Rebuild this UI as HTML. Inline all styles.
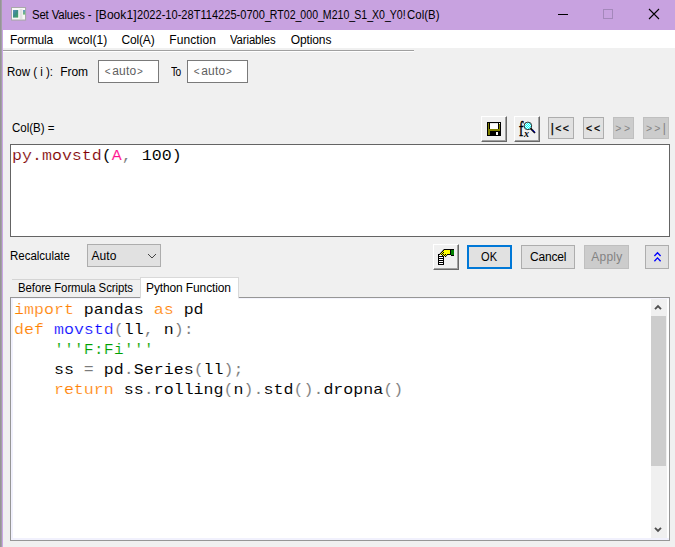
<!DOCTYPE html>
<html>
<head>
<meta charset="utf-8">
<title>Set Values</title>
<style>
html,body{margin:0;padding:0;}
body{width:675px;height:547px;overflow:hidden;background:#f0f0f0;position:relative;
  font-family:"Liberation Sans",sans-serif;font-size:12px;color:#000;}
.abs{position:absolute;}
.u{letter-spacing:-1.2px;}
.lt{font-size:10px;}
.l2{font-size:10.5px;}
.t{position:absolute;white-space:nowrap;line-height:16px;height:16px;transform-origin:0 50%;}
#titlebar{left:0;top:0;width:675px;height:30px;background:#c8a2e0;}
#menubar{left:3px;top:30px;width:672px;height:18px;background:#fff;}
#edgeL{left:0;top:0;width:2px;height:547px;background:linear-gradient(90deg,#959595 0,#959595 1px,#a3a0a6 1px);}
#edgeL2{left:2px;top:30px;width:1px;height:517px;background:#c9a6e4;}
.sep{left:3px;top:50px;width:411px;height:1px;background:#a0a0a0;}
.sep2{left:3px;top:51px;width:411px;height:1px;background:#fff;}
.inp{position:absolute;background:#fff;border:1px solid #7a7a7a;box-sizing:border-box;}
.btn{position:absolute;box-sizing:border-box;background:#e1e1e1;border:1px solid #adadad;}
.btn.dis{background:#cccccc;border-color:#bfbfbf;}
.btn3d{position:absolute;box-sizing:border-box;background:#f0f0f0;
  border-top:1px solid #fff;border-left:1px solid #fff;border-right:1px solid #696969;border-bottom:1px solid #696969;}
.btn3d:before{content:"";position:absolute;left:0;top:0;right:0;bottom:0;border-right:1px solid #a0a0a0;border-bottom:1px solid #a0a0a0;}
.mono{font-family:"Liberation Mono",monospace;font-size:14px;line-height:20px;white-space:pre;position:absolute;transform:scaleX(1.1875);transform-origin:0 0;-webkit-text-stroke:0.05px #fff;}
.o{color:#ff8000;-webkit-text-stroke:0.2px #fff}.b{color:#0000ff;-webkit-text-stroke:0.2px #fff}.g{color:#7a7a7a;-webkit-text-stroke:0.1px #fff}.gr{color:#00a000;-webkit-text-stroke:0.2px #fff}.k{color:#000}.r{color:#800000;-webkit-text-stroke:0.15px #fff}.m{color:#ff1090;-webkit-text-stroke:0.1px #fff}
</style>
</head>
<body>
<div class="abs" id="titlebar"></div>
<div class="abs" id="menubar"></div>
<div class="abs" id="edgeL"></div>
<div class="abs" id="edgeL2"></div>
<div class="abs sep"></div><div class="abs sep2"></div>

<!-- title icon -->
<svg class="abs" style="left:10px;top:6px" width="18" height="16" viewBox="0 0 18 16">
  <defs>
    <linearGradient id="gA" x1="0" y1="0" x2="1" y2="1"><stop offset="0" stop-color="#5b8fc0"/><stop offset="0.5" stop-color="#3c8d86"/><stop offset="1" stop-color="#43a85a"/></linearGradient>
    <linearGradient id="gB" x1="0" y1="0" x2="0" y2="1"><stop offset="0" stop-color="#6a98c8"/><stop offset="1" stop-color="#6cc070"/></linearGradient>
  </defs>
  <rect x="1" y="1" width="15.5" height="14" rx="1" fill="#b9a0cc" opacity="0.55"/>
  <rect x="1.5" y="1.5" width="14" height="12.5" fill="#f7f7f7" stroke="#a9a9a9" stroke-width="1"/>
  <rect x="3" y="4" width="5.2" height="7.6" fill="url(#gA)"/>
  <rect x="9.6" y="3" width="2.8" height="10" fill="#e2e2e2"/>
  <rect x="13" y="4" width="2.2" height="4.6" fill="url(#gB)"/>
</svg>
<div id="title" class="abs" style="left:0;top:0;width:0;height:0;"><span class="t" id="t1" style="left:31.73px;top:7px;transform:scaleX(0.95);letter-spacing:-0.171px;">Set Values - </span><span class="t" id="t2" style="left:95.44px;top:7px;letter-spacing:0.058px;">[Book1]</span><span class="t" id="t3" style="left:137.0px;top:7px;transform:scaleX(0.92);letter-spacing:0.023px;">2022-10-28T114225-0700</span><span class="t" id="t4" style="left:265.15px;top:7px;transform:scaleX(0.88);letter-spacing:0.02px;"><span class="u">_</span>RT02<span class="u">_</span>000<span class="u">_</span>M210<span class="u">_</span>S1<span class="u">_</span>X0<span class="u">_</span>Y0!</span><span class="t" id="t5" style="left:407.31px;top:7px;transform:scaleX(0.95);letter-spacing:0.028px;">Col(B)</span></div>

<!-- window buttons -->
<svg class="abs" style="left:550px;top:0" width="125" height="30" viewBox="0 0 125 30">
  <path d="M8 14.5H18" stroke="#000" stroke-width="1" fill="none"/>
  <rect x="53.5" y="9.5" width="9" height="9" fill="none" stroke="#a488bb" stroke-width="1"/>
  <path d="M99 9L109 19M109 9L99 19" stroke="#000" stroke-width="1.1" fill="none"/>
</svg>

<!-- menu -->
<div class="t" id="m1" style="left:10.05px;top:32px;letter-spacing:-0.135px;">Formula</div>
<div class="t" id="m2" style="left:68.38px;top:32px;letter-spacing:0.029px;">wcol(1)</div>
<div class="t" id="m3" style="left:121.38px;top:32px;letter-spacing:-0.144px;">Col(A)</div>
<div class="t" id="m4" style="left:169.37px;top:32px;letter-spacing:0.065px;">Function</div>
<div class="t" id="m5" style="left:230.16px;top:32px;transform:scaleX(0.94);letter-spacing:-0.089px;">Variables</div>
<div class="t" id="m6" style="left:290.81px;top:32px;letter-spacing:-0.123px;">Options</div>

<!-- row -->
<div class="t" id="r1" style="left:7.31px;top:64px;transform:scaleX(0.96);letter-spacing:-0.014px;">Row ( i ):</div>
<div class="t" id="r2" style="left:60.37px;top:64px;letter-spacing:-0.083px;">From</div>
<div class="inp" style="left:98px;top:60px;width:61px;height:23px;"></div>
<div class="t" id="a1" style="left:104.7px;top:63px;color:#5f5f5f;letter-spacing:0.181px;"><span class="lt" style="margin-right:1.5px">&lt;</span>auto<span class="lt" style="margin-left:0.7px">&gt;</span></div>
<div class="t" id="r3" style="left:170.82px;top:64px;transform:scaleX(0.85);letter-spacing:-0.595px;">To</div>
<div class="inp" style="left:187px;top:60px;width:61px;height:23px;"></div>
<div class="t" id="a2" style="left:193.7px;top:63px;color:#5f5f5f;letter-spacing:0.173px;"><span class="lt" style="margin-right:1.5px">&lt;</span>auto<span class="lt" style="margin-left:0.7px">&gt;</span></div>

<div class="t" id="colb" style="left:12.31px;top:120px;transform:scaleX(0.96);letter-spacing:0.0px;">Col(B) =</div>

<!-- toolbar buttons -->
<div class="btn3d" style="left:481px;top:116px;width:26px;height:26px;"></div>
<svg class="abs" style="left:487px;top:122px" width="14" height="14" viewBox="0 0 14 14" shape-rendering="crispEdges">
  <rect x="0" y="0" width="14" height="14" fill="#000"/>
  <rect x="1" y="1" width="12" height="12" fill="#808000"/>
  <rect x="3" y="1" width="8" height="6" fill="#fff"/>
  <rect x="3" y="1" width="8" height="1" fill="#e8e8e8"/>
  <rect x="12" y="1" width="1" height="1" fill="#fff"/>
  <rect x="11" y="1" width="1" height="6" fill="#000"/>
  <rect x="2" y="1" width="1" height="6" fill="#000"/>
  <rect x="3" y="9" width="10" height="4" fill="#000"/>
  <rect x="9" y="10" width="2" height="3" fill="#fff"/>
</svg>
<div class="btn3d" style="left:514px;top:116px;width:26px;height:26px;"></div>
<div class="abs" id="fxf" style="-webkit-text-stroke:0.6px #000;left:518.8px;top:117.3px;font-family:'Liberation Serif',serif;font-size:22px;line-height:24px;color:#000;transform:scaleX(0.6);transform-origin:0 0;">f</div>
<div class="abs" id="fxx" style="left:524px;top:128px;font-family:'Liberation Serif',serif;font-style:italic;font-weight:bold;font-size:10px;line-height:12px;color:#000;">x</div>
<svg class="abs" style="left:522px;top:119px" width="16" height="16" viewBox="0 0 16 16">
  <defs><pattern id="cy" width="2" height="2" patternUnits="userSpaceOnUse"><rect width="2" height="2" fill="#00ffff"/><rect x="0" y="0" width="1" height="1" fill="#eaffff"/><rect x="1" y="1" width="1" height="1" fill="#eaffff"/></pattern></defs>
  <circle cx="5.9" cy="6.9" r="3.8" fill="url(#cy)" stroke="#303030" stroke-width="1"/>
  <path d="M8.6 9.4L13 14" stroke="#000" stroke-width="1.8" fill="none"/>
  <path d="M10.8 11.2L13.2 13.7" stroke="#0000e0" stroke-width="1.1" stroke-dasharray="1 0.8" fill="none"/>
</svg>
<div class="btn" style="left:548px;top:117px;width:26px;height:22px;"></div>
<div class="btn" style="left:583px;top:117px;width:21px;height:22px;"></div>
<div class="btn dis" style="left:613px;top:117px;width:21px;height:22px;"></div>
<div class="btn dis" style="left:643px;top:117px;width:26px;height:22px;"></div>
<div class="t" id="b1" style="-webkit-text-stroke:0.25px #000;left:550.84px;top:120px;letter-spacing:1.379px;">|<span class="l2">&lt;&lt;</span></div>
<div class="t" id="b2" style="-webkit-text-stroke:0.25px #000;left:586.01px;top:120px;letter-spacing:1.86px;"><span class="l2">&lt;&lt;</span></div>
<div class="t" id="b3" style="left:615.18px;top:120px;color:#838383;letter-spacing:2.6px;"><span class="l2">&gt;&gt;</span></div>
<div class="t" id="b4" style="left:645.91px;top:120px;color:#838383;letter-spacing:2.324px;"><span class="l2">&gt;&gt;</span>|</div>

<!-- formula box -->
<div class="abs" style="left:10px;top:144px;width:660px;height:93px;background:#fff;box-sizing:border-box;border:1px solid #646464;"></div>
<div class="mono" id="f1" style="left:11.8px;top:146.2px;"><span class="r">py.movstd</span><span class="k">(</span><span class="m">A</span><span class="g">,</span> <span class="k">100)</span></div>

<!-- recalc row -->
<div class="t" id="rc" style="left:9.59px;top:248px;transform:scaleX(0.96);letter-spacing:-0.032px;">Recalculate</div>
<div class="btn" style="left:87px;top:244px;width:74px;height:23px;"></div>
<div class="t" id="auto" style="left:91.43px;top:248px;letter-spacing:0.115px;">Auto</div>
<svg class="abs" style="left:147px;top:252px" width="10" height="8" viewBox="0 0 10 8"><path d="M1 2L5 6L9 2" stroke="#444" stroke-width="1" fill="none"/></svg>

<div class="btn3d" style="left:433px;top:244px;width:26px;height:26px;"></div>
<svg class="abs" style="left:437px;top:248px" width="18" height="18" viewBox="0 0 18 18" shape-rendering="crispEdges">
  <defs><pattern id="chk" width="2" height="2" patternUnits="userSpaceOnUse"><rect width="2" height="2" fill="#ffff00"/><rect x="0" y="0" width="1" height="1" fill="#000"/><rect x="1" y="1" width="1" height="1" fill="#000"/></pattern></defs>
  <rect x="1" y="6" width="6" height="11" fill="#000"/>
  <rect x="2" y="7" width="4" height="1" fill="#fff"/>
  <rect x="2" y="9" width="4" height="1" fill="#fff"/>
  <rect x="2" y="11" width="4" height="1" fill="#fff"/>
  <rect x="2" y="13" width="4" height="1" fill="#fff"/>
  <rect x="2" y="15" width="4" height="1" fill="#fff"/>
  <path d="M1.5 7L7 1H14V7H10.5L8.5 9L7 7Z" fill="#000" shape-rendering="auto"/>
  <path d="M7 2L2.7 6.8L8.5 8.6L10.4 5.8Z" fill="url(#chk)"/>
  <rect x="7" y="2" width="6" height="4" fill="#ffff00"/>
  <rect x="13" y="1" width="1" height="6" fill="#000"/>
  <rect x="14" y="1" width="3" height="7" fill="#000"/>
  <rect x="14" y="2" width="3" height="5" fill="#008000"/>
</svg>
<div class="btn" style="left:467px;top:245px;width:45px;height:24px;border:2px solid #0078d7;"></div>
<div class="t" id="ok" style="left:481.33px;top:249px;transform:scaleX(0.92);letter-spacing:0.18px;">OK</div>
<div class="btn" style="left:521px;top:245px;width:54px;height:24px;"></div>
<div class="t" id="cancel" style="left:530.03px;top:249px;letter-spacing:-0.195px;">Cancel</div>
<div class="btn dis" style="left:584px;top:245px;width:45px;height:24px;"></div>
<div class="t" id="apply" style="left:591.27px;top:249px;color:#838383;letter-spacing:0.248px;">Apply</div>
<div class="btn" style="left:645px;top:245px;width:24px;height:24px;"></div>
<svg class="abs" style="left:651px;top:250px" width="12" height="14" viewBox="0 0 12 14"><path d="M3.4 6L6.5 2.7L9.6 6M3.4 11.2L6.5 7.9L9.6 11.2" stroke="#0000ff" stroke-width="1.35" fill="none"/></svg>

<!-- tabs -->
<div class="abs" style="left:12px;top:279px;width:129px;height:19px;box-sizing:border-box;border-top:1px solid #d4d4d4;background:#f0f0f0;"></div>
<div class="t" id="tab1" style="left:17.95px;top:280px;transform:scaleX(0.95);letter-spacing:-0.079px;">Before Formula Scripts</div>

<!-- editor -->
<div class="abs" id="editor" style="left:10px;top:297px;width:660px;height:244px;background:#fff;box-sizing:border-box;border:1px solid #969696;box-shadow:inset 2px 0 0 #f1f1fd, inset 0 -2px 0 #f1f1fd, inset 0 1px 0 #f4f4fd;"></div>
<div class="abs" style="left:141px;top:297px;width:97px;height:3px;background:#fff;"></div>
<div class="abs" style="left:140px;top:277px;width:99px;height:21px;box-sizing:border-box;border:1px solid #d9d9d9;border-bottom:none;background:#fff;"></div>
<div class="t" id="tab2" style="left:146.05px;top:280px;letter-spacing:-0.125px;">Python Function</div>

<div class="mono" id="code" style="left:14.2px;top:300.2px;"><span class="o">import</span> pandas <span class="o">as</span> pd
<span class="o">def</span> <span class="b">movstd</span><span class="g">(</span>ll<span class="g">,</span> n<span class="g">):</span>
    <span class="gr">'''F:Fi'''</span>
    ss <span class="g">=</span> pd<span class="g">.</span>Series<span class="g">(</span>ll<span class="g">);</span>
    <span class="o">return</span> ss<span class="g">.</span>rolling<span class="g">(</span>n<span class="g">).</span>std<span class="g">().</span>dropna<span class="g">()</span></div>

<!-- scrollbar -->
<div class="abs" style="left:651px;top:299px;width:16px;height:239px;background:#f0f0f0;"></div>
<div class="abs" style="left:651px;top:316px;width:15px;height:150px;background:#cdcdcd;"></div>
<svg class="abs" style="left:653px;top:303.1px" width="10" height="8" viewBox="0 0 10 8"><path d="M2 6.2L5 3.2L8 6.2" stroke="#505050" stroke-width="1.9" fill="none"/></svg>
<svg class="abs" style="left:653px;top:526.3px" width="10" height="8" viewBox="0 0 10 8"><path d="M2 1.8L5 4.8L8 1.8" stroke="#505050" stroke-width="1.9" fill="none"/></svg>
</body>
</html>
